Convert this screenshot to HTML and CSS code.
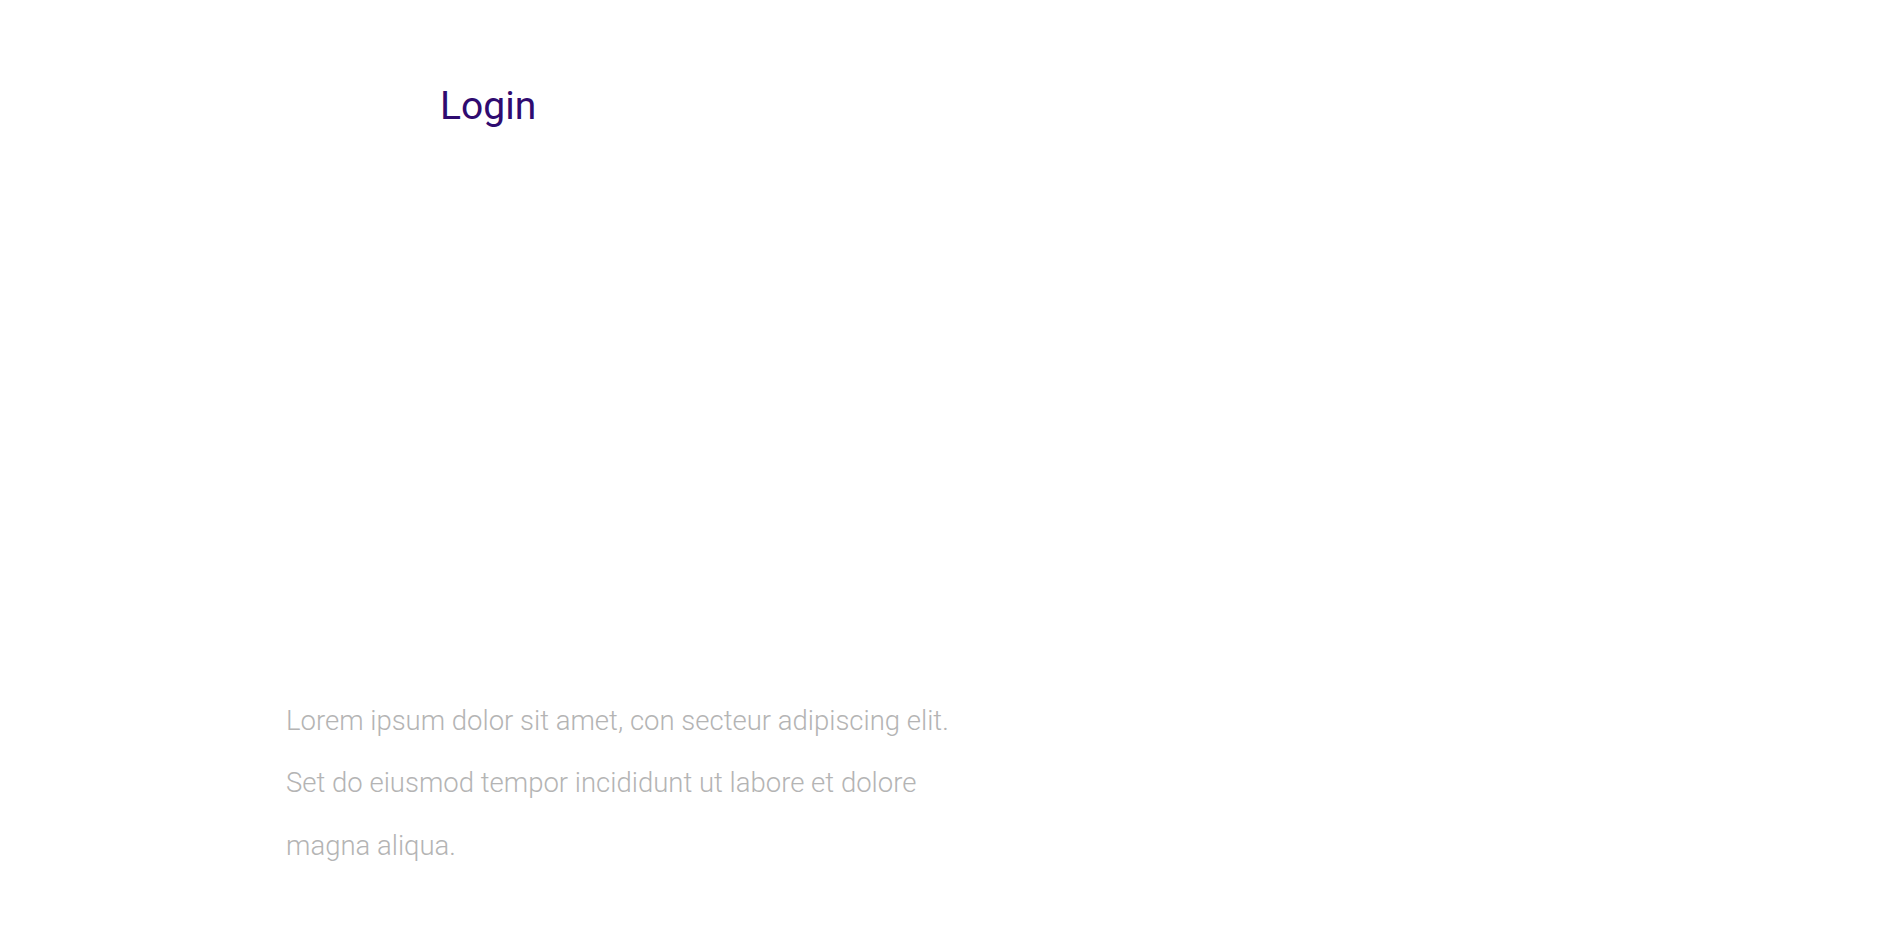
FILE: index.html
```html
<!DOCTYPE html>
<html lang="en">
<head>
<meta charset="utf-8">
<title>Login</title>
<link rel="stylesheet" href="styles.css">
</head>
<body>
<main class="page">
  <header class="head">
    <h1 class="title">Login</h1>
  </header>
  <section class="form-area"></section>
  <p class="intro">Lorem ipsum dolor sit amet, con secteur adipiscing elit.<br>Set do eiusmod tempor incididunt ut labore et dolore<br>magna aliqua.</p>
</main>
</body>
</html>
```
FILE: styles.css
```css
html, body {
  margin: 0;
  padding: 0;
  background: #ffffff;
}
.page {
  padding: 84px 0 0 286px;
  font-family: Roboto, "Noto Sans", sans-serif;
}
.head {
  padding-left: 154px;
}
.title {
  margin: 0;
  font-size: 39px;
  line-height: 1.17;
  font-weight: 400;
  color: #2f0b70;
}
.form-area {
  height: 560px;
}
.intro {
  margin: 0;
  font-size: 27.5px;
  line-height: 62.5px;
  font-weight: 300;
  color: #b4b4b4;
}
```
